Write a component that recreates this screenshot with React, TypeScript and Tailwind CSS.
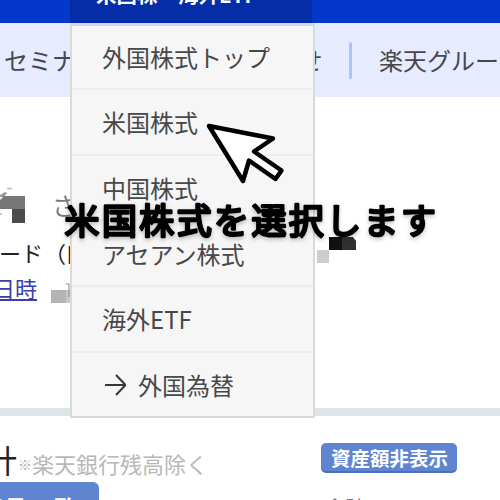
import { ReactNode } from 'react'

interface MenuItem {
  label: string
  arrow?: boolean
}

const menuItems: MenuItem[] = [
  { label: '外国株式トップ' },
  { label: '米国株式' },
  { label: '中国株式' },
  { label: 'アセアン株式' },
  { label: '海外ETF' },
  { label: '外国為替', arrow: true },
]

function ArrowRight() {
  return (
    <svg width="24" height="24" viewBox="0 0 24 24" fill="none" stroke="#383838" strokeWidth="2" aria-hidden="true">
      <path d="M3 12H24M14 2L23.5 12L14 22" />
    </svg>
  )
}

function SubNav() {
  return (
    <nav className="flex h-[74px] items-center bg-[#e6ebff] pl-[4px] text-2xl whitespace-nowrap text-[#47474c]">
      <span className="w-[223px] shrink-0">セミナー</span>
      <span className="w-[96px] shrink-0">お知らせ</span>
      <span className="ml-[26px] h-[37px] w-[3px] shrink-0 rounded-full bg-[#adc4f6]" />
      <span className="ml-[27px]">楽天グループ</span>
    </nav>
  )
}

function DropdownMenu() {
  return (
    <div className="absolute top-0 left-[70px] w-[245px]">
      <div className="relative h-[23px] w-[242px] overflow-hidden bg-[#052da8]">
        <span className="absolute -top-[21px] left-[26px] text-[20.5px] leading-[30px] font-bold whitespace-nowrap text-white">
          米国株・海外ETF
        </span>
      </div>
      <ul className="h-[395px] border-2 border-t-3 border-[#d8dadc] border-t-[#d2d7e9] bg-[#f6f6f6]">
        {menuItems.map((item) => (
          <li
            key={item.label}
            className="flex h-[65.7px] items-center gap-[12px] border-b-2 border-[#ededed] pt-px pl-[30px] text-2xl whitespace-nowrap text-[#484848] first:h-[64px] first:pt-0 last:h-[64px] last:border-b-0"
          >
            {item.arrow && <ArrowRight />}
            <span>{item.label}</span>
          </li>
        ))}
      </ul>
    </div>
  )
}

function BlueButton({ children, className }: { children: ReactNode; className: string }) {
  return (
    <button type="button" className={`overflow-hidden bg-[#5f85d1] font-bold whitespace-nowrap text-white ${className}`}>
      {children}
    </button>
  )
}

function Account() {
  return (
    <section className="h-[311px] pt-[89px]">
      <div className="flex h-[48px] pl-[52px] text-2xl leading-[38px] text-[#777]">さん</div>
      <div className="-ml-px flex h-[36px] text-[22px] leading-[36px] whitespace-nowrap text-[#222]">
        <span>ード</span>
        <span className="ml-px">（口座）</span>
      </div>
      <a className="-ml-[7px] flex h-[32px] w-[44px] text-[22px] leading-[34px] whitespace-nowrap text-[#3d3da8] underline decoration-2 underline-offset-2">
        日時
      </a>
    </section>
  )
}

function Summary() {
  return (
    <section className="flex h-[92px] justify-between border-t-8 border-[#dce5e9]">
      <div className="w-[260px]">
        <div className="-ml-[15px] flex h-[66px] items-center pt-[19px] whitespace-nowrap">
          <span className="w-[33px] text-[32px] text-[#222]">計</span>
          <span className="pt-[11px] text-[14px] text-[#aaa]">※</span>
          <span className="pt-[9px] text-[22px] text-[#b8b8b8]">楽天銀行残高除く</span>
        </div>
        <BlueButton className="-ml-[6px] h-[54px] w-[105px] rounded-md text-[25px]">
          <span className="-ml-[70px] block w-[158px]">保有商品一覧</span>
        </BlueButton>
      </div>
      <div className="w-[179px] pt-[27px]">
        <BlueButton className="flex h-[30px] w-[136px] items-center justify-center rounded-[5px] border-b-2 border-[#4b70bb] text-[19.5px]">
          <span className="pt-[2px] pl-px">資産額非表示</span>
        </BlueButton>
        <p className="mt-[23px] ml-[4px] h-[20px] text-[20px] leading-[24px] text-[#777]">合計の</p>
      </div>
    </section>
  )
}

function Mosaic() {
  return (
    <svg className="absolute top-0 left-0" width="500" height="500" viewBox="0 0 500 500" aria-hidden="true">
      <path d="M0 195L5 192L7 193L4 197H0Z" fill="#999" />
      <path d="M7 188.5H12" stroke="#bbb" strokeWidth="1.5" />
      <path d="M0 200L4 196H25V209H0Z" fill="#777" />
      <rect x="12" y="209" width="13" height="14" fill="#4b4b4b" />
      <rect x="0" y="213" width="2" height="2" fill="#ccc" />
      <rect x="51" y="290" width="15" height="13" fill="#b4b4b4" />
      <rect x="66" y="290" width="4" height="13" fill="#c8c8c8" />
      <path d="M66 284H69V297" fill="none" stroke="#888" strokeWidth="1" />
      <rect x="329" y="237" width="13" height="13" fill="#111" />
      <path d="M342 237H353L356 241V250H342Z" fill="#303030" />
      <rect x="317" y="250" width="12" height="13" fill="#cdcdcd" />
    </svg>
  )
}

function Pointer() {
  return (
    <svg className="absolute top-[120px] left-[204px]" width="84" height="68" viewBox="0 0 84 68" aria-hidden="true">
      <path
        d="M5 6L69 18.5L50 31.5L77.5 50.5L71.5 59L45 40.5L39 61Z"
        fill="#fff"
        stroke="#000"
        strokeWidth="4.5"
        strokeLinejoin="round"
      />
    </svg>
  )
}

// svg text, since html text strokes can't have round joins
function Caption() {
  return (
    <svg className="absolute top-[193px] left-[55px] drop-shadow-[0_2px_2px_rgba(0,0,0,0.25)]" width="390" height="56">
      <text
        x="9.5"
        y="41"
        textLength="371.5"
        fontSize="35"
        stroke="#000"
        strokeWidth="2.6"
        strokeLinejoin="round"
        strokeLinecap="round"
      >
        米国株式を選択します
      </text>
    </svg>
  )
}

export default function App() {
  return (
    <main
      lang="ja"
      className="relative h-[500px] w-[500px] overflow-hidden bg-white font-['Noto_Sans_CJK_JP',sans-serif]"
    >
      <header className="h-[23px] bg-[#0338cb]" />
      <SubNav />
      <Account />
      <Summary />
      <Mosaic />
      <DropdownMenu />
      <Pointer />
      <Caption />
    </main>
  )
}
